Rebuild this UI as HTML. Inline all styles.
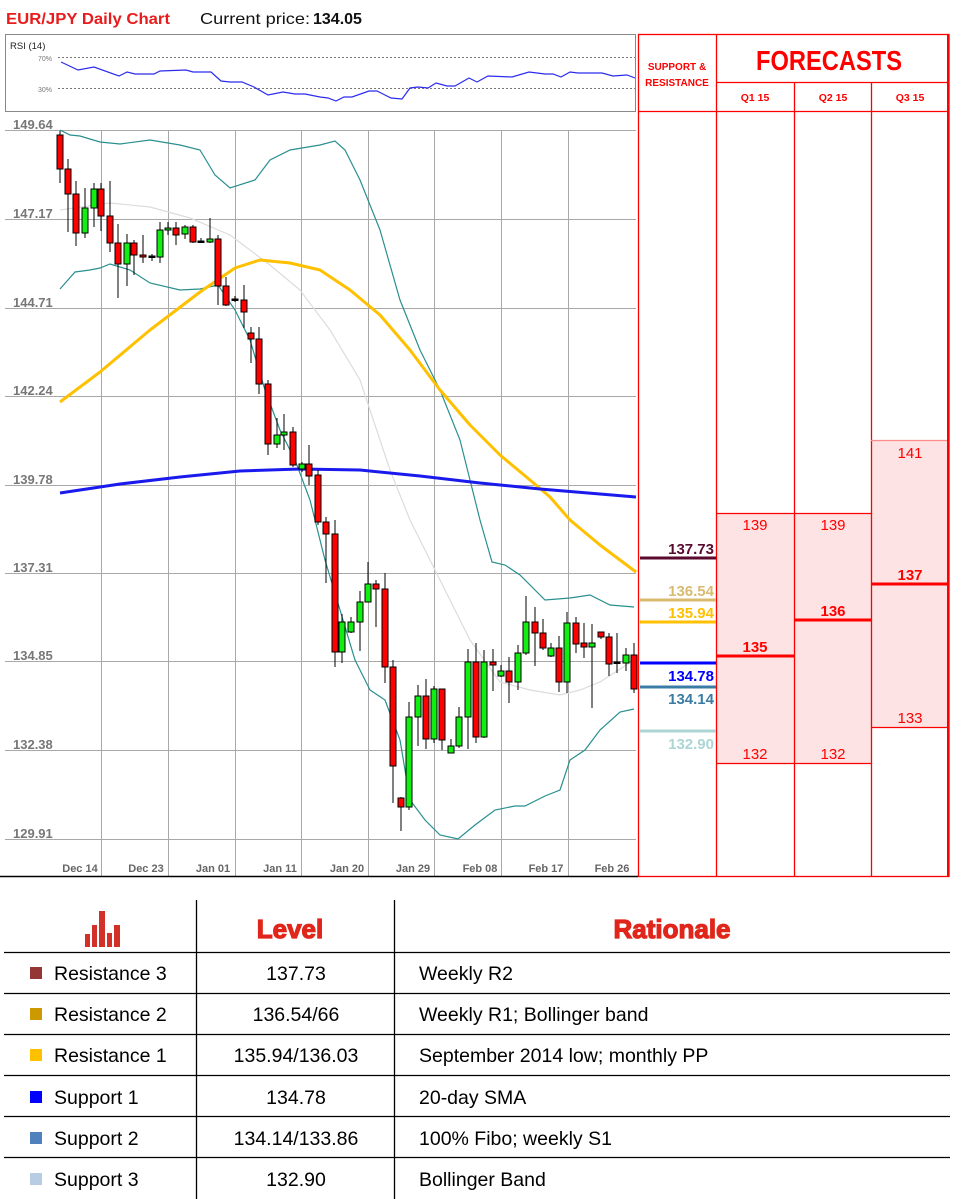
<!DOCTYPE html>
<html><head><meta charset="utf-8"><style>
html,body{margin:0;padding:0;background:#fff;}
svg{display:block;}
text{font-family:"Liberation Sans",sans-serif;}
</style></head><body>
<svg width="966" height="1199" viewBox="0 0 966 1199" xmlns="http://www.w3.org/2000/svg">
<rect width="966" height="1199" fill="#fff"/>
<!-- Title -->
<text x="6" y="24" font-size="16" font-weight="bold" fill="#e81c1c" textLength="164" lengthAdjust="spacingAndGlyphs">EUR/JPY Daily Chart</text>
<text x="200" y="24" font-size="16" fill="#111" textLength="110" lengthAdjust="spacingAndGlyphs">Current price:</text>
<text x="313" y="24" font-size="16" font-weight="bold" fill="#111">134.05</text>

<!-- RSI box -->
<rect x="5.5" y="34.5" width="630" height="77" fill="#fff" stroke="#888"/>
<text x="10" y="49" font-size="9.5" fill="#222">RSI (14)</text>
<text x="38" y="61" font-size="7" fill="#777">70%</text>
<text x="38" y="92" font-size="7" fill="#777">30%</text>
<line x1="58" y1="57.5" x2="635" y2="57.5" stroke="#777" stroke-dasharray="2,2"/>
<line x1="58" y1="88.5" x2="635" y2="88.5" stroke="#777" stroke-dasharray="2,2"/>
<polyline fill="none" stroke="#2b2bef" stroke-width="1.2" points="61,62 78,70 94,67 119,76 127,72 135,74 154,74 160,71 186,70 193,72 211,72 221,81 230,82 242,82 254,87 268,95 283,92 295,94 305,94 320,97 328,98 336,101 344,97 352,97 369,91 377,91 391,98 402,99 410,88 418,87 428,88 436,83 447,86 455,86 469,78 477,82 488,76 512,77 529,72 545,74 553,74 561,77 570,72 578,73 602,73 613,76 627,75 635,78"/>

<!-- Grid -->
<g stroke="#a8a8a8" stroke-width="1">
<line x1="5" y1="130.5" x2="636" y2="130.5"/>
<line x1="5" y1="219.5" x2="636" y2="219.5"/>
<line x1="5" y1="308.5" x2="636" y2="308.5"/>
<line x1="5" y1="396.5" x2="636" y2="396.5"/>
<line x1="5" y1="485.5" x2="636" y2="485.5"/>
<line x1="5" y1="573.5" x2="636" y2="573.5"/>
<line x1="5" y1="661.5" x2="636" y2="661.5"/>
<line x1="5" y1="750.5" x2="636" y2="750.5"/>
<line x1="5" y1="839.5" x2="636" y2="839.5"/>
<line x1="101.5" y1="130" x2="101.5" y2="876"/>
<line x1="168.5" y1="130" x2="168.5" y2="876"/>
<line x1="235.5" y1="130" x2="235.5" y2="876"/>
<line x1="301.5" y1="130" x2="301.5" y2="876"/>
<line x1="368.5" y1="130" x2="368.5" y2="876"/>
<line x1="434.5" y1="130" x2="434.5" y2="876"/>
<line x1="501.5" y1="130" x2="501.5" y2="876"/>
<line x1="568.5" y1="130" x2="568.5" y2="876"/>
</g>
<g font-size="13" fill="#777" font-weight="bold">
<text x="13" y="129">149.64</text>
<text x="13" y="218">147.17</text>
<text x="13" y="307">144.71</text>
<text x="13" y="395">142.24</text>
<text x="13" y="484">139.78</text>
<text x="13" y="572">137.31</text>
<text x="13" y="660">134.85</text>
<text x="13" y="749">132.38</text>
<text x="13" y="838">129.91</text>
</g>
<g font-size="11" fill="#666" font-weight="bold" text-anchor="middle">
<text x="80" y="872">Dec 14</text>
<text x="146" y="872">Dec 23</text>
<text x="213" y="872">Jan 01</text>
<text x="280" y="872">Jan 11</text>
<text x="347" y="872">Jan 20</text>
<text x="413" y="872">Jan 29</text>
<text x="480" y="872">Feb 08</text>
<text x="546" y="872">Feb 17</text>
<text x="612" y="872">Feb 26</text>
</g>
<line x1="0" y1="876.5" x2="638" y2="876.5" stroke="#000" stroke-width="1.5"/>

<!-- Indicator lines -->
<polyline fill="none" stroke="#dcdcdc" stroke-width="1.2" points="60,210 110,203 150,207 190,218 230,235 270,265 300,290 330,330 360,380 390,470 410,520 440,580 470,640 500,682 530,690 560,695 580,690 600,682 634,660"/>
<polyline fill="none" stroke="#2a8f8f" stroke-width="1.2" points="60,130 70,135 80,136 100,142 120,144 150,140 180,145 200,150 215,175 230,188 255,180 270,160 290,150 320,145 335,141 345,150 360,180 380,230 400,300 420,350 440,390 460,440 480,520 492,562 505,565 520,575 545,600 570,598 590,595 610,605 634,607"/>
<polyline fill="none" stroke="#2a8f8f" stroke-width="1.2" points="60,289 75,272 90,270 100,268 110,264 130,270 150,283 180,290 200,289 218,285 235,310 250,340 265,390 280,430 295,460 310,500 325,560 340,610 355,660 370,690 385,700 400,740 410,800 425,820 440,835 458,839 475,825 495,810 515,806 525,806 545,796 560,790 570,760 585,750 600,730 620,712 634,709"/>
<polyline fill="none" stroke="#ffc000" stroke-width="3" stroke-linejoin="round" points="60,402 100,372 150,330 200,292 235,268 260,260 290,263 320,270 350,290 380,315 410,350 440,390 470,425 500,455 530,480 550,497 570,520 600,545 636,572"/>
<polyline fill="none" stroke="#1a1aee" stroke-width="3" stroke-linejoin="round" points="60,493 120,484 180,477 240,471 300,469 360,470 420,476 480,483 540,489 600,494 636,497"/>

<!-- Candles -->
<g stroke="#000" stroke-width="1">
<line x1="60" y1="131" x2="60" y2="183"/><rect x="57" y="135" width="6" height="34" fill="#f00"/>
<line x1="68" y1="159" x2="68" y2="232"/><rect x="65" y="169" width="6" height="25" fill="#f00"/>
<line x1="76" y1="181" x2="76" y2="246"/><rect x="73" y="194" width="6" height="39" fill="#f00"/>
<line x1="85" y1="188" x2="85" y2="238"/><rect x="82" y="208" width="6" height="25" fill="#1e1"/>
<line x1="94" y1="183" x2="94" y2="227"/><rect x="91" y="189" width="6" height="19" fill="#1e1"/>
<line x1="101" y1="183" x2="101" y2="231"/><rect x="98" y="189" width="6" height="27" fill="#f00"/>
<line x1="110" y1="181" x2="110" y2="252"/><rect x="107" y="216" width="6" height="27" fill="#f00"/>
<line x1="118" y1="224" x2="118" y2="298"/><rect x="115" y="243" width="6" height="21" fill="#f00"/>
<line x1="127" y1="234" x2="127" y2="286"/><rect x="124" y="243" width="6" height="21" fill="#1e1"/>
<line x1="134" y1="240" x2="134" y2="275"/><rect x="131" y="243" width="6" height="12" fill="#f00"/>
<line x1="143" y1="235" x2="143" y2="263"/><rect x="140" y="255" width="6" height="2" fill="#f00"/>
<line x1="152" y1="254" x2="152" y2="261"/><rect x="149" y="256" width="6" height="1.5" fill="#000"/>
<line x1="160" y1="222" x2="160" y2="263"/><rect x="157" y="230" width="6" height="27" fill="#1e1"/>
<line x1="168" y1="222" x2="168" y2="235"/><rect x="165" y="228" width="6" height="2" fill="#1e1"/>
<line x1="176" y1="222" x2="176" y2="245"/><rect x="173" y="228" width="6" height="7" fill="#f00"/>
<line x1="185" y1="225" x2="185" y2="239"/><rect x="182" y="227" width="6" height="7" fill="#1e1"/>
<line x1="193" y1="225" x2="193" y2="243"/><rect x="190" y="227" width="6" height="15" fill="#f00"/>
<line x1="201" y1="238" x2="201" y2="243"/><rect x="198" y="241" width="6" height="1.5" fill="#000"/>
<line x1="210" y1="218" x2="210" y2="243"/><rect x="207" y="239" width="6" height="3" fill="#1e1"/>
<line x1="218" y1="235" x2="218" y2="305"/><rect x="215" y="239" width="6" height="47" fill="#f00"/>
<line x1="226" y1="277" x2="226" y2="306"/><rect x="223" y="286" width="6" height="19" fill="#f00"/>
<line x1="235" y1="296" x2="235" y2="302"/><rect x="232" y="299" width="6" height="1.5" fill="#000"/>
<line x1="244" y1="285" x2="244" y2="328"/><rect x="241" y="300" width="6" height="12" fill="#f00"/>
<line x1="251" y1="327" x2="251" y2="363"/><rect x="248" y="333" width="6" height="6" fill="#f00"/>
<line x1="259" y1="327" x2="259" y2="394"/><rect x="256" y="339" width="6" height="45" fill="#f00"/>
<line x1="268" y1="380" x2="268" y2="455"/><rect x="265" y="384" width="6" height="60" fill="#f00"/>
<line x1="277" y1="418" x2="277" y2="448"/><rect x="274" y="435" width="6" height="9" fill="#1e1"/>
<line x1="284" y1="414" x2="284" y2="450"/><rect x="281" y="432" width="6" height="3" fill="#1e1"/>
<line x1="293" y1="427" x2="293" y2="467"/><rect x="290" y="432" width="6" height="33" fill="#f00"/>
<line x1="302" y1="462" x2="302" y2="472"/><rect x="299" y="464" width="6" height="5" fill="#1e1"/>
<line x1="309" y1="445" x2="309" y2="485"/><rect x="306" y="464" width="6" height="12" fill="#f00"/>
<line x1="318" y1="470" x2="318" y2="525"/><rect x="315" y="475" width="6" height="47" fill="#f00"/>
<line x1="326" y1="517" x2="326" y2="583"/><rect x="323" y="522" width="6" height="12" fill="#f00"/>
<line x1="335" y1="520" x2="335" y2="667"/><rect x="332" y="534" width="6" height="118" fill="#f00"/>
<line x1="342" y1="614" x2="342" y2="663"/><rect x="339" y="622" width="6" height="30" fill="#1e1"/>
<line x1="351" y1="617" x2="351" y2="633"/><rect x="348" y="622" width="6" height="10" fill="#1e1"/>
<line x1="360" y1="591" x2="360" y2="651"/><rect x="357" y="602" width="6" height="20" fill="#1e1"/>
<line x1="368" y1="562" x2="368" y2="602"/><rect x="365" y="584" width="6" height="18" fill="#1e1"/>
<line x1="376" y1="580" x2="376" y2="627"/><rect x="373" y="584" width="6" height="5" fill="#f00"/>
<line x1="385" y1="573" x2="385" y2="683"/><rect x="382" y="589" width="6" height="78" fill="#f00"/>
<line x1="393" y1="660" x2="393" y2="803"/><rect x="390" y="667" width="6" height="99" fill="#f00"/>
<line x1="401" y1="797" x2="401" y2="831"/><rect x="398" y="798" width="6" height="9" fill="#f00"/>
<line x1="409" y1="702" x2="409" y2="810"/><rect x="406" y="717" width="6" height="90" fill="#1e1"/>
<line x1="418" y1="685" x2="418" y2="746"/><rect x="415" y="696" width="6" height="21" fill="#1e1"/>
<line x1="426" y1="679" x2="426" y2="749"/><rect x="423" y="696" width="6" height="43" fill="#f00"/>
<line x1="434" y1="686" x2="434" y2="743"/><rect x="431" y="689" width="6" height="50" fill="#1e1"/>
<line x1="442" y1="689" x2="442" y2="750"/><rect x="439" y="689" width="6" height="51" fill="#f00"/>
<line x1="451" y1="739" x2="451" y2="753"/><rect x="448" y="746" width="6" height="7" fill="#1e1"/>
<line x1="459" y1="707" x2="459" y2="748"/><rect x="456" y="717" width="6" height="29" fill="#1e1"/>
<line x1="468" y1="649" x2="468" y2="749"/><rect x="465" y="662" width="6" height="55" fill="#1e1"/>
<line x1="476" y1="643" x2="476" y2="743"/><rect x="473" y="662" width="6" height="75" fill="#f00"/>
<line x1="484" y1="650" x2="484" y2="738"/><rect x="481" y="662" width="6" height="75" fill="#1e1"/>
<line x1="493" y1="649" x2="493" y2="691"/><rect x="490" y="662" width="6" height="3" fill="#f00"/>
<line x1="501" y1="665" x2="501" y2="677"/><rect x="498" y="671" width="6" height="5" fill="#1e1"/>
<line x1="509" y1="657" x2="509" y2="703"/><rect x="506" y="671" width="6" height="11" fill="#f00"/>
<line x1="518" y1="645" x2="518" y2="690"/><rect x="515" y="653" width="6" height="29" fill="#1e1"/>
<line x1="526" y1="596" x2="526" y2="655"/><rect x="523" y="622" width="6" height="31" fill="#1e1"/>
<line x1="535" y1="607" x2="535" y2="666"/><rect x="532" y="622" width="6" height="11" fill="#f00"/>
<line x1="543" y1="619" x2="543" y2="650"/><rect x="540" y="633" width="6" height="15" fill="#f00"/>
<line x1="551" y1="643" x2="551" y2="657"/><rect x="548" y="648" width="6" height="8" fill="#1e1"/>
<line x1="559" y1="636" x2="559" y2="692"/><rect x="556" y="648" width="6" height="34" fill="#f00"/>
<line x1="567" y1="612" x2="567" y2="693"/><rect x="564" y="623" width="6" height="59" fill="#1e1"/>
<line x1="576" y1="617" x2="576" y2="653"/><rect x="573" y="623" width="6" height="21" fill="#f00"/>
<line x1="584" y1="623" x2="584" y2="658"/><rect x="581" y="643" width="6" height="4" fill="#f00"/>
<line x1="592" y1="624" x2="592" y2="708"/><rect x="589" y="643" width="6" height="4" fill="#1e1"/>
<line x1="601" y1="632" x2="601" y2="639"/><rect x="598" y="632" width="6" height="5" fill="#f00"/>
<line x1="609" y1="633" x2="609" y2="676"/><rect x="606" y="637" width="6" height="27" fill="#f00"/>
<line x1="617" y1="633" x2="617" y2="673"/><rect x="614" y="662" width="6" height="1.5" fill="#000"/>
<line x1="626" y1="648" x2="626" y2="671"/><rect x="623" y="655" width="6" height="8" fill="#1e1"/>
<line x1="634" y1="643" x2="634" y2="693"/><rect x="631" y="655" width="6" height="34" fill="#f00"/>
</g>

<!-- Forecast panel -->
<rect x="717" y="513" width="154" height="250" fill="#fde3e3"/>
<rect x="871" y="440" width="78" height="287" fill="#fde3e3"/>
<g stroke="#f00" stroke-width="1.3" fill="none">
<rect x="638.5" y="34.5" width="310.5" height="842"/>
<line x1="716.5" y1="34" x2="716.5" y2="876"/>
<line x1="716" y1="82.5" x2="949" y2="82.5"/>
<line x1="638" y1="111.5" x2="949" y2="111.5"/>
<line x1="794.5" y1="82" x2="794.5" y2="876"/>
<line x1="871.5" y1="82" x2="871.5" y2="876"/>
<line x1="717" y1="513.5" x2="871" y2="513.5"/>
<line x1="717" y1="763.5" x2="871" y2="763.5"/>
<line x1="871" y1="440.5" x2="949" y2="440.5" stroke="#f88"/>
<line x1="871" y1="727.5" x2="949" y2="727.5"/>
</g>
<line x1="948" y1="34" x2="948" y2="877" stroke="#f00" stroke-width="2"/>
<g stroke="#f00" stroke-width="3">
<line x1="717" y1="656" x2="794" y2="656"/>
<line x1="794" y1="620" x2="871" y2="620"/>
<line x1="871" y1="584" x2="948" y2="584"/>
</g>
<g fill="#f00" text-anchor="middle">
<text x="677" y="70" font-size="10" font-weight="bold">SUPPORT &amp;</text>
<text x="677" y="86" font-size="10" font-weight="bold">RESISTANCE</text>
<text x="829" y="70" font-size="28" font-weight="bold" textLength="146" lengthAdjust="spacingAndGlyphs">FORECASTS</text>
<text x="755" y="101" font-size="10.5" font-weight="bold">Q1 15</text>
<text x="833" y="101" font-size="10.5" font-weight="bold">Q2 15</text>
<text x="910" y="101" font-size="10.5" font-weight="bold">Q3 15</text>
<text x="755" y="530" font-size="15">139</text>
<text x="833" y="530" font-size="15">139</text>
<text x="910" y="458" font-size="15">141</text>
<text x="755" y="759" font-size="15">132</text>
<text x="833" y="759" font-size="15">132</text>
<text x="910" y="723" font-size="15">133</text>
<text x="755" y="652" font-size="15" font-weight="bold">135</text>
<text x="833" y="616" font-size="15" font-weight="bold">136</text>
<text x="910" y="580" font-size="15" font-weight="bold">137</text>
</g>
<g stroke-width="3">
<line x1="640" y1="558" x2="716" y2="558" stroke="#5a0a2e"/>
<line x1="640" y1="600" x2="716" y2="600" stroke="#d9bb70"/>
<line x1="640" y1="622" x2="716" y2="622" stroke="#ffc000"/>
<line x1="640" y1="663" x2="716" y2="663" stroke="#0000ff"/>
<line x1="640" y1="687" x2="716" y2="687" stroke="#3a7ca5"/>
<line x1="640" y1="731" x2="716" y2="731" stroke="#acd6d6"/>
</g>
<g font-size="15" font-weight="bold" text-anchor="end">
<text x="714" y="554" fill="#5a0a2e">137.73</text>
<text x="714" y="596" fill="#d9bb70">136.54</text>
<text x="714" y="618" fill="#ffc000">135.94</text>
<text x="714" y="681" fill="#0000ff">134.78</text>
<text x="714" y="704" fill="#3a7ca5">134.14</text>
<text x="714" y="749" fill="#acd6d6">132.90</text>
</g>

<!-- Table -->
<g fill="#d4302a">
<rect x="85" y="934" width="5" height="13"/>
<rect x="92" y="925" width="5" height="22"/>
<rect x="99" y="911" width="6" height="36"/>
<rect x="107" y="933" width="5" height="14"/>
<rect x="114" y="925" width="6" height="22"/>
</g>
<g fill="#e0261a" font-size="26" font-weight="bold" text-anchor="middle" stroke="#e0261a" stroke-width="1.2">
<text x="290" y="938">Level</text>
<text x="672" y="938">Rationale</text>
</g>
<g stroke="#000" stroke-width="1.3">
<line x1="196.5" y1="900" x2="196.5" y2="1199"/>
<line x1="394.5" y1="900" x2="394.5" y2="1199"/>
<line x1="4" y1="952.5" x2="950" y2="952.5"/>
<line x1="4" y1="993.5" x2="950" y2="993.5"/>
<line x1="4" y1="1034.5" x2="950" y2="1034.5"/>
<line x1="4" y1="1075.5" x2="950" y2="1075.5"/>
<line x1="4" y1="1116.5" x2="950" y2="1116.5"/>
<line x1="4" y1="1157.5" x2="950" y2="1157.5"/>
</g>
<rect x="30" y="967" width="12" height="12" fill="#943634"/>
<rect x="30" y="1008" width="12" height="12" fill="#cc9900"/>
<rect x="30" y="1049" width="12" height="12" fill="#ffc000"/>
<rect x="30" y="1091" width="12" height="12" fill="#0000ff"/>
<rect x="30" y="1132" width="12" height="12" fill="#4f81bd"/>
<rect x="30" y="1173" width="12" height="12" fill="#b8cce4"/>
<g font-size="19.5" fill="#000">
<text x="54" y="980">Resistance 3</text>
<text x="54" y="1021">Resistance 2</text>
<text x="54" y="1062">Resistance 1</text>
<text x="54" y="1104">Support 1</text>
<text x="54" y="1145">Support 2</text>
<text x="54" y="1186">Support 3</text>
<g text-anchor="middle">
<text x="296" y="980">137.73</text>
<text x="296" y="1021">136.54/66</text>
<text x="296" y="1062">135.94/136.03</text>
<text x="296" y="1104">134.78</text>
<text x="296" y="1145">134.14/133.86</text>
<text x="296" y="1186">132.90</text>
</g>
<text x="419" y="980">Weekly R2</text>
<text x="419" y="1021">Weekly R1; Bollinger band</text>
<text x="419" y="1062">September 2014 low; monthly PP</text>
<text x="419" y="1104">20-day SMA</text>
<text x="419" y="1145">100% Fibo; weekly S1</text>
<text x="419" y="1186">Bollinger Band</text>
</g>
</svg>
</body></html>
